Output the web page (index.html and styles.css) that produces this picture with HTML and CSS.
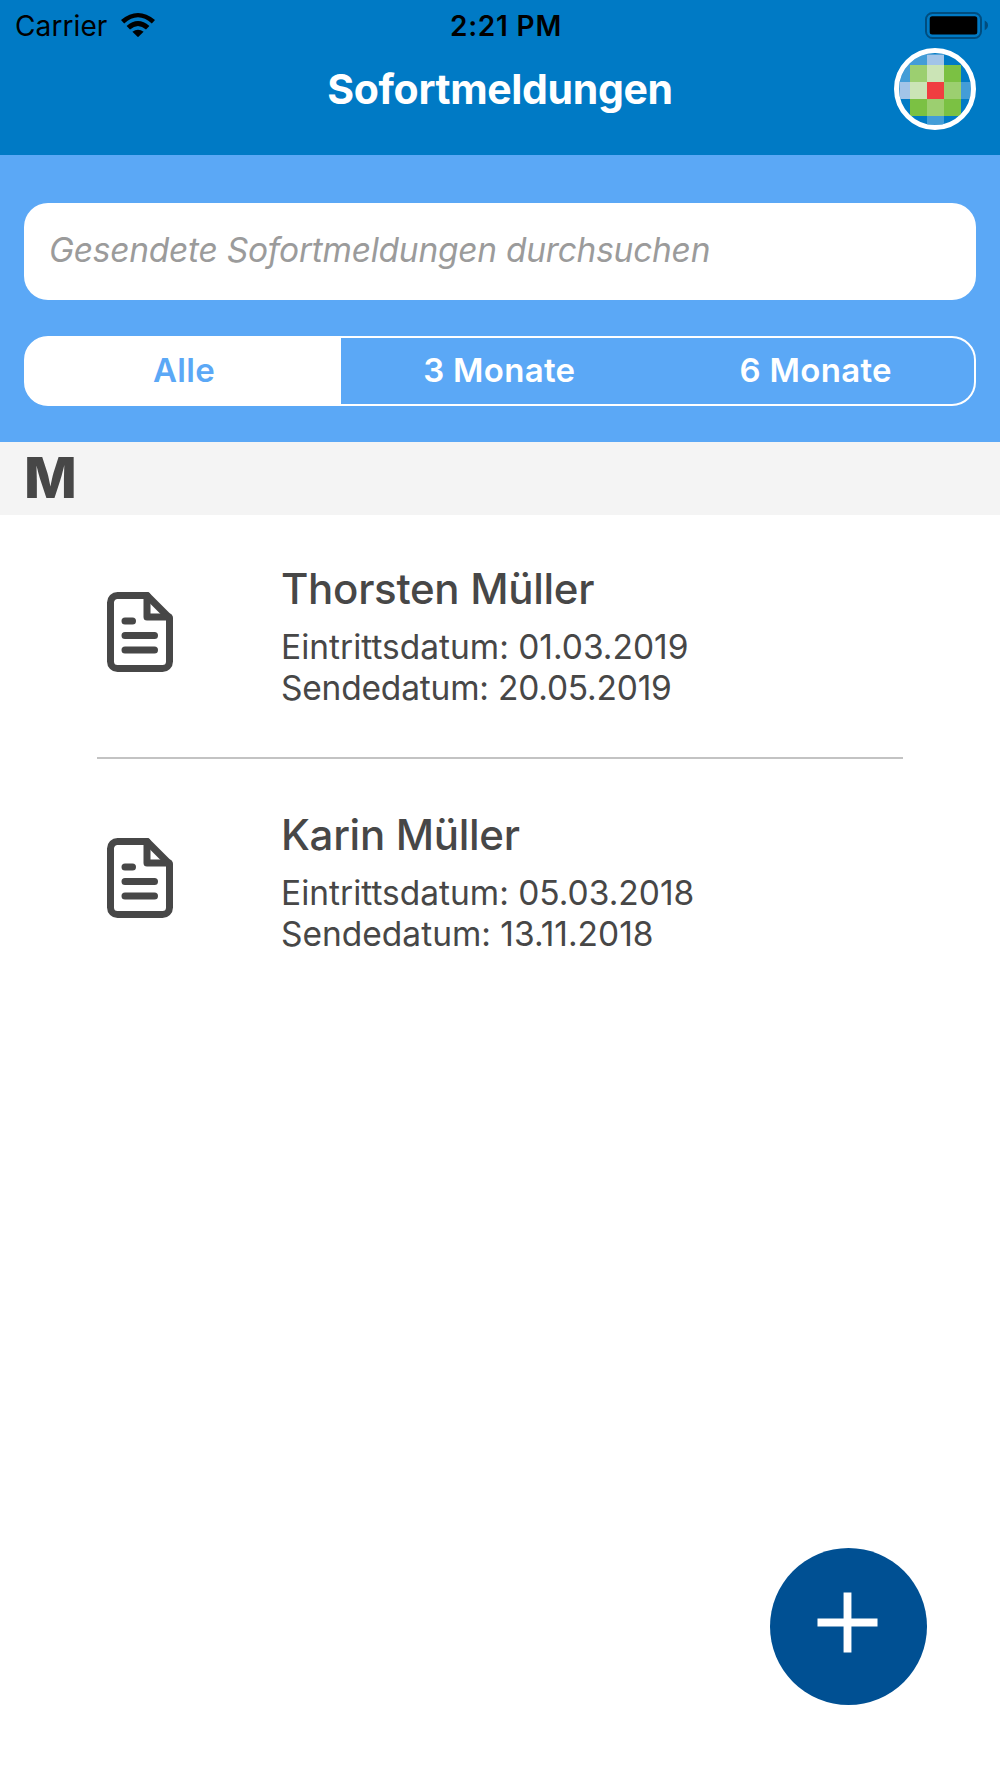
FILE: index.html
```html
<!DOCTYPE html>
<html lang="de">
<head>
  <meta charset="UTF-8">
  <meta name="viewport" content="width=device-width, initial-scale=1.0">
  <title>Sofortmeldungen</title>
  <link rel="stylesheet" href="styles.css">
</head>
<body>

<header class="header">
  <div class="statusbar">
    <div class="carrier">
      <span>Carrier</span>
      <svg class="wifi" viewBox="0 0 34 24">
        <path d="M0 7 Q17 -7 34 7 L30.8 10.4 Q17 -1.8 3.2 10.4 Z"/>
        <path d="M5.6 13 Q17 3 28.4 13 L25 16.4 Q17 9.4 9 16.4 Z"/>
        <path d="M11.4 18.8 Q17 14.6 22.6 18.8 L17 24.2 Z"/>
      </svg>
    </div>
    <span class="time">2:21 PM</span>
    <svg class="battery" viewBox="0 0 63 27">
      <rect x="1" y="1" width="55" height="25" rx="6.5" fill="none" stroke="#004d7f" stroke-width="2"/>
      <rect x="4.7" y="4.3" width="47.6" height="18.2" rx="2.5"/>
      <path d="M59.7 8.5 Q63 10.2 63 13.3 Q63 16.4 59.7 18.2 Z" fill="#004d7f"/>
    </svg>
  </div>
  <div class="navbar">
    <h1 class="title">Sofortmeldungen</h1>
    <svg class="logo" viewBox="0 0 82 82">
      <clipPath id="round"><circle cx="41" cy="41" r="36"/></clipPath>
      <g clip-path="url(#round)">
        <path fill="#439dd7" d="M0 0h33v17H16v17H0z"/>
        <path fill="#a2c4e8" d="M33 6.5h17V17H33zM5.5 34H16v17H5.5z"/>
        <path fill="#439dd7" d="M67 34h15v17H67zM33 68h17v14H33z"/>
        <path fill="#7bc143" d="M16 17h51v51H16z"/>
        <path fill="#9ccf70" d="M16 17h17v17H16zM50 34h17v17H50zM33 51h17v17H33z"/>
        <path fill="#cbe4b6" d="M33 17h17v17H33zM16 34h17v17H16z"/>
        <path fill="#f03e40" d="M33 34h17v17H33z"/>
      </g>
      <circle cx="41" cy="41" r="38.5" fill="none" stroke="#fff" stroke-width="5"/>
    </svg>
  </div>
</header>

<div class="filter">
  <input class="search" type="text" placeholder="Gesendete Sofortmeldungen durchsuchen">
  <div class="tabs">
    <button class="tab active">Alle</button>
    <button class="tab">3 Monate</button>
    <button class="tab">6 Monate</button>
  </div>
</div>

<h2 class="letter">M</h2>

<ul class="list">
  <li class="item">
    <svg class="doc" viewBox="0 0 66 80">
      <path d="M10.5 3.5H40L62.5 26V69.5a7 7 0 0 1-7 7h-45a7 7 0 0 1-7-7v-59a7 7 0 0 1 7-7z"/>
      <path d="M40 3.5V25H62"/>
      <path d="M18 29h7.500M18 43.500h29.500M18 58h29.500"/>
    </svg>
    <div class="info">
      <h3 class="name">Thorsten Müller</h3>
      <p class="date">Eintrittsdatum: 01.03.2019</p>
      <p class="date sent">Sendedatum: 20.05.2019</p>
    </div>
  </li>
  <li class="item">
    <svg class="doc" viewBox="0 0 66 80">
      <path d="M10.5 3.5H40L62.5 26V69.5a7 7 0 0 1-7 7h-45a7 7 0 0 1-7-7v-59a7 7 0 0 1 7-7z"/>
      <path d="M40 3.5V25H62"/>
      <path d="M18 29h7.500M18 43.500h29.500M18 58h29.500"/>
    </svg>
    <div class="info">
      <h3 class="name">Karin Müller</h3>
      <p class="date">Eintrittsdatum: 05.03.2018</p>
      <p class="date">Sendedatum: 13.11.2018</p>
    </div>
  </li>
</ul>

<button class="add" aria-label="Neue Sofortmeldung">
  <svg class="plus" viewBox="0 0 62 62">
    <path d="M31 0.500v61M0.500 31h61"/>
  </svg>
</button>

</body>
</html>
```

FILE: styles.css
```css
* {
  box-sizing: border-box;
}
body {
  margin: 0;
  min-height: 1778px;
  background: #fff;
  color: #474747;
  font-family: Inter, "Liberation Sans", sans-serif;
}
h1, h2, h3, p, ul {
  margin: 0;
  padding: 0;
}
button {
  border: none;
  padding: 0;
  font-family: inherit;
  cursor: pointer;
}
.header {
  height: 155px;
  background: #007ac5;
}
.statusbar {
  display: grid;
  grid-template-columns: 1fr auto 1fr;
  align-items: center;
  height: 48px;
  padding: 2px 12px 0 15px;
  color: #000;
  font-size: 28px;
  line-height: 48px;
}
.carrier {
  display: flex;
  align-items: center;
  gap: 14px;
  margin-right: auto;
  letter-spacing: 0.1px;
}
.wifi {
  width: 34px;
  height: 24px;
  margin-bottom: 3px;
}
.time {
  font-weight: 600;
  letter-spacing: 0.8px;
  margin-left: 9px;
}
.battery {
  width: 63px;
  height: 27px;
  margin-left: auto;
  margin-bottom: 2px;
}
.navbar {
  display: grid;
  grid-template-columns: 1fr auto 1fr;
  align-items: center;
  height: 82.600px;
  padding: 0 24px;
}
.title {
  grid-column: 2;
  color: #fff;
  font-size: 41px;
  font-weight: 700;
  letter-spacing: -0.35px;
  line-height: 47px;
}
.logo {
  width: 82px;
  height: 82px;
  margin-left: auto;
}
.filter {
  height: 287px;
  padding: 48px 24px 0;
  background: #5ba8f6;
}
.search {
  display: block;
  width: 100%;
  height: 97px;
  padding: 0 25px 3px;
  border: none;
  border-radius: 24px;
  background: #fff;
  font-family: inherit;
  font-size: 33.500px;
  font-style: italic;
  letter-spacing: -0.25px;
}
.search::placeholder {
  color: #9b9b9b;
}
.tabs {
  display: flex;
  height: 70px;
  margin-top: 36px;
  border: 2.400px solid #fff;
  border-radius: 24px;
  background: #fff;
  overflow: hidden;
}
.tab {
  flex: 1;
  padding-bottom: 2px;
  background: #5ba8f6;
  color: #fff;
  font-size: 33px;
  font-weight: 600;
  letter-spacing: 0.3px;
}
.tab.active {
  flex: 0 0 315px;
  padding-left: 1px;
  background: #fff;
  color: #5ba8f6;
}
.letter {
  height: 73px;
  padding-left: 24px;
  background: #f4f4f4;
  font-size: 56px;
  font-weight: 800;
  letter-spacing: -1px;
  line-height: 72px;
}
.list {
  list-style: none;
  padding: 0 97px;
}
.item {
  display: flex;
  height: 244px;
  padding: 49px 0 0 10px;
  margin-bottom: 2px;
  border-bottom: 2px solid #c3c3c3;
}
.item:last-child {
  border-bottom: none;
}
.doc {
  width: 66px;
  height: 80px;
  margin-top: 28px;
  fill: none;
  stroke: #474747;
  stroke-width: 7;
  stroke-linecap: round;
  stroke-linejoin: round;
}
.info {
  margin-left: 108px;
}
.name {
  margin-bottom: 13px;
  font-size: 42px;
  font-weight: 500;
  letter-spacing: -0.3px;
  line-height: 50px;
}
.date {
  font-size: 33.500px;
  line-height: 41px;
}
.date.sent {
  letter-spacing: -0.2px;
}
.add {
  position: fixed;
  right: 73px;
  bottom: 73px;
  width: 157px;
  height: 157px;
  border-radius: 50%;
  background: #005093;
}
.plus {
  display: block;
  width: 61px;
  height: 61px;
  margin: -8px auto 0 47px;
}
.plus path {
  fill: none;
  stroke: #fff;
  stroke-width: 8;
}
```
